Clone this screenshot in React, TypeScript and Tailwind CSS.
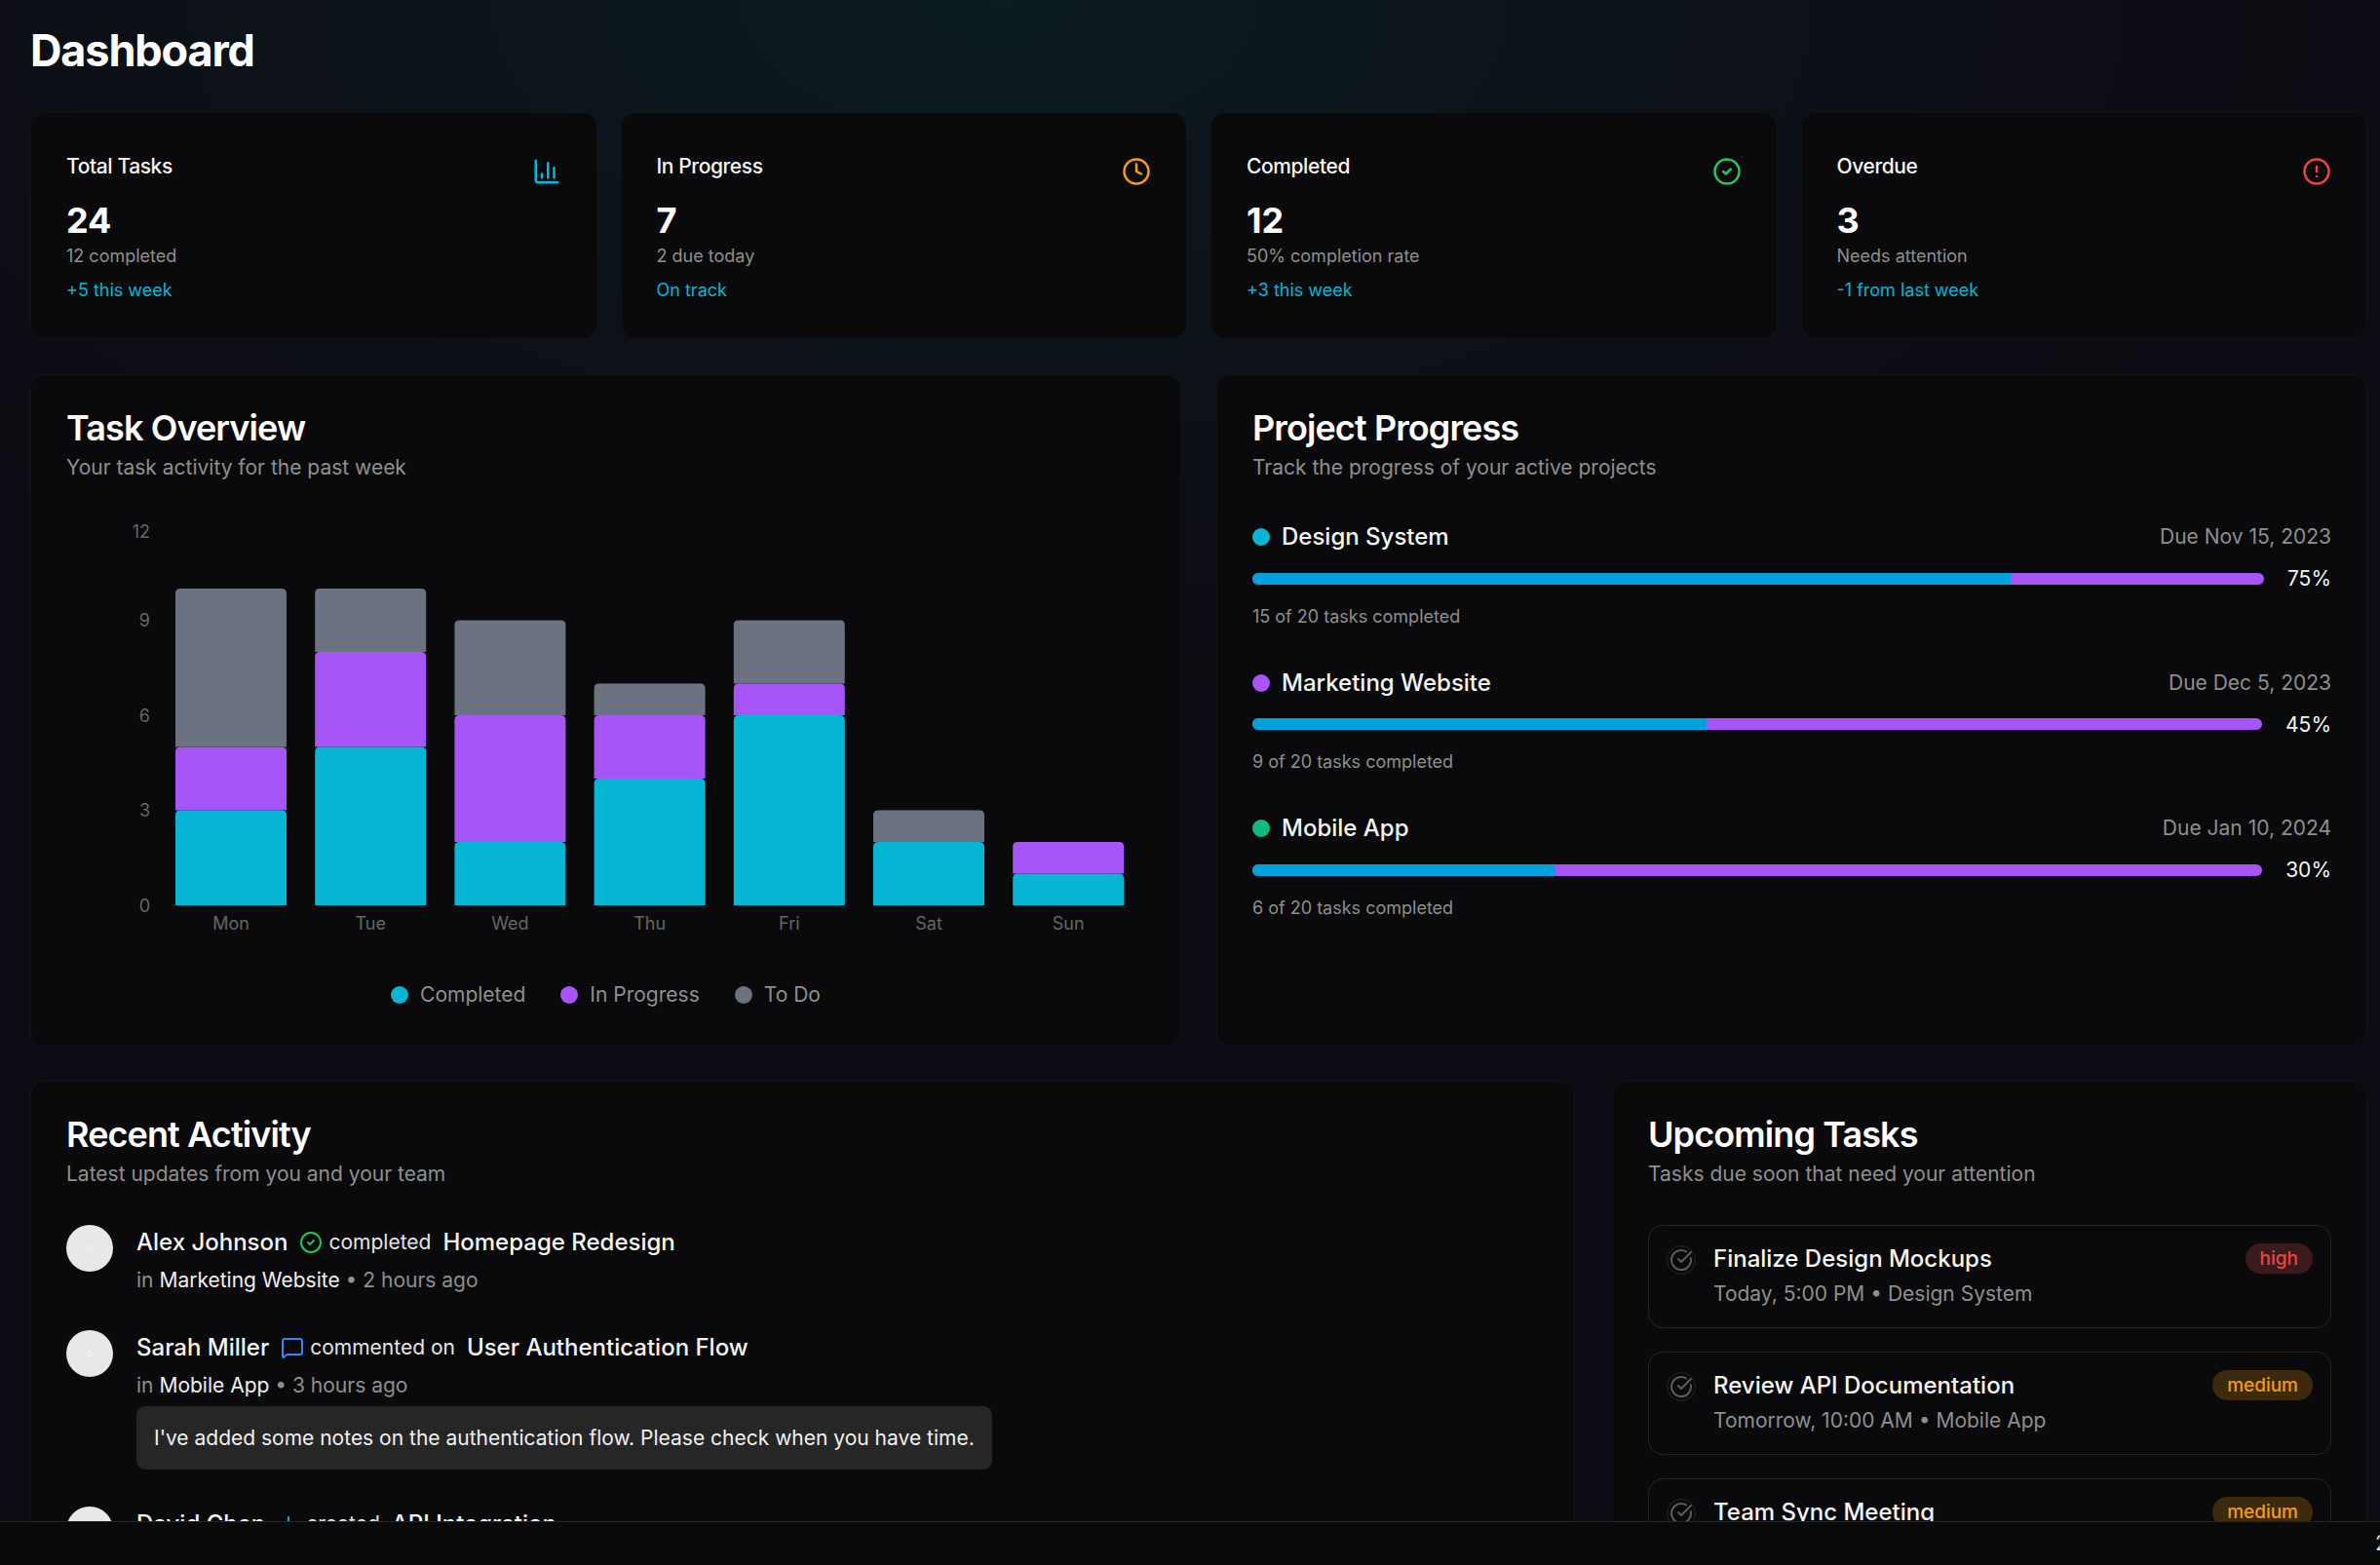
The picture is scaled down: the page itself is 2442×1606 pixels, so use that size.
import { ChartColumn, Clock, CircleCheck, CircleAlert, CircleCheckBig, MessageSquare, Plus } from 'lucide-react'

const STATS = [
  { title: 'Total Tasks', value: '24', sub: '12 completed', trend: '+5 this week', icon: <ChartColumn size={30} className="text-[#06b6d4]" /> },
  { title: 'In Progress', value: '7', sub: '2 due today', trend: 'On track', icon: <Clock size={30} className="text-[#f59e0b]" /> },
  { title: 'Completed', value: '12', sub: '50% completion rate', trend: '+3 this week', icon: <CircleCheck size={30} className="text-[#22c55e]" /> },
  { title: 'Overdue', value: '3', sub: 'Needs attention', trend: '-1 from last week', icon: <CircleAlert size={30} className="text-[#ef4444]" /> },
]

const WEEK = [
  { day: 'Mon', done: 3, doing: 2, todo: 5 },
  { day: 'Tue', done: 5, doing: 3, todo: 2 },
  { day: 'Wed', done: 2, doing: 4, todo: 3 },
  { day: 'Thu', done: 4, doing: 2, todo: 1 },
  { day: 'Fri', done: 6, doing: 1, todo: 2 },
  { day: 'Sat', done: 2, doing: 0, todo: 1 },
  { day: 'Sun', done: 1, doing: 1, todo: 0 },
]

const PROJECTS = [
  { name: 'Design System', due: 'Due Nov 15, 2023', pct: 75, note: '15 of 20 tasks completed', dot: 'bg-[#06b6d4]' },
  { name: 'Marketing Website', due: 'Due Dec 5, 2023', pct: 45, note: '9 of 20 tasks completed', dot: 'bg-[#a855f7]' },
  { name: 'Mobile App', due: 'Due Jan 10, 2024', pct: 30, note: '6 of 20 tasks completed', dot: 'bg-[#10b981]' },
]

const TASKS = [
  { title: 'Finalize Design Mockups', meta: 'Today, 5:00 PM • Design System', level: 'high' },
  { title: 'Review API Documentation', meta: 'Tomorrow, 10:00 AM • Mobile App', level: 'medium' },
  { title: 'Team Sync Meeting', meta: '', level: 'medium' },
]

const CARD = 'rounded-[15px] border border-[#ffffff0a] bg-[#0a0a0c]'

function CardHead({ title, sub }: { title: string; sub: string }) {
  return (
    <div>
      <h2 className="text-[36px] leading-[36px] font-semibold tracking-[-0.9px] text-white">{title}</h2>
      <p className="mt-[7px] text-[21px] leading-[31.5px] text-[#8f8f8f]">{sub}</p>
    </div>
  )
}

// one stacked segment, only the top corners are rounded
function seg(x: number, top: number, h: number) {
  const w = 114
  const r = 5
  return `M${x} ${top + h}V${top + r}Q${x} ${top} ${x + r} ${top}H${x + w - r}Q${x + w} ${top} ${x + w} ${top + r}V${top + h}Z`
}

function WeekChart() {
  const base = 399
  const unit = 32.5
  const ticks = [
    { t: '12', y: 16 },
    { t: '9', y: 107 },
    { t: '6', y: 205 },
    { t: '3', y: 302 },
    { t: '0', y: 400 },
  ]
  return (
    <svg width="1106" height="440" className="mt-[35px] block">
      {ticks.map(t => (
        <text key={t.t} x="86" y={t.y + 6} textAnchor="end" fontSize="18" fill="#666666">{t.t}</text>
      ))}
      {WEEK.map((d, i) => {
        const x = 112 + i * 143.2
        const doneTop = base - d.done * unit
        const doingTop = doneTop - d.doing * unit
        const todoTop = doingTop - d.todo * unit
        return (
          <g key={d.day}>
            <path d={seg(x, doneTop, d.done * unit)} fill="#06b6d4" />
            {d.doing > 0 && <path d={seg(x, doingTop, d.doing * unit)} fill="#a855f7" />}
            {d.todo > 0 && <path d={seg(x, todoTop, d.todo * unit)} fill="#6b7280" />}
            <text x={x + 57} y="424" textAnchor="middle" fontSize="18" fill="#666666">{d.day}</text>
          </g>
        )
      })}
    </svg>
  )
}

function LegendItem({ color, label }: { color: string; label: string }) {
  return (
    <div className="flex items-center gap-[12px]">
      <span className={`h-[18px] w-[18px] rounded-full ${color}`} />
      <span className="text-[21px] leading-[31.5px] text-[#8f8f8f]">{label}</span>
    </div>
  )
}

function Avatar() {
  return (
    <div className="flex h-[48px] w-[48px] shrink-0 items-center justify-center rounded-full bg-[#e8e8e8]">
      <span className="h-[6px] w-[6px] rounded-full border border-[#f4f4f4]" />
    </div>
  )
}

function Activity({ name, icon, verb, item, project, time, note }: { name: string; icon: React.ReactNode; verb: string; item: string; project?: string; time?: string; note?: string }) {
  return (
    <div className="flex gap-[24px]">
      <Avatar />
      <div>
        <div className="flex items-center text-[24px] leading-[36px] font-medium text-[#f5f5f5]">
          <span>{name}</span>
          <span className="mr-[6px] ml-[12px] flex">{icon}</span>
          <span className="mr-[12px] text-[21px] font-normal text-[#e5e5e5]">{verb}</span>
          <span>{item}</span>
        </div>
        {project && (
          <div className="mt-[5px] text-[21px] leading-[31.5px] text-[#8f8f8f]">
            in <span className="text-[#f0f0f0]">{project}</span> • {time}
          </div>
        )}
        {note && (
          <div className="mt-[6px] mb-[3px] w-fit rounded-[9px] bg-[#262626] px-[18px] py-[16.5px] text-[21px] leading-[31.5px] text-[#f0f0f0]">{note}</div>
        )}
      </div>
    </div>
  )
}

export default function App() {
  return (
    <div className="flex h-[1606px] w-[2442px] flex-col overflow-hidden bg-[#0a0a0a] font-['Inter',sans-serif]">
      <main className="flex-1 overflow-hidden bg-[radial-gradient(ellipse_1500px_800px_at_42%_0%,#0b1b20_0%,#0d0f16_65%,#0d0c14_100%)] pt-[25px] pr-[13px] pl-[31px]">
        <h1 className="mb-[36px] text-[45px] leading-[54px] font-bold tracking-[-1.125px] text-white">Dashboard</h1>

        <div className="mb-[36px] grid grid-cols-4 gap-[24px]">
          {STATS.map(s => (
            <div key={s.title} className={`${CARD} p-[36px]`}>
              <div className="flex items-start justify-between">
                <div className="mt-[3px] text-[21px] leading-[31.5px] font-medium tracking-[-0.4px] text-[#f5f5f5]">{s.title}</div>
                <div className="mt-[9px] h-[30px]">{s.icon}</div>
              </div>
              <div className="mt-[15px] text-[36px] leading-[40px] font-bold text-white">{s.value}</div>
              <div className="mt-[2.5px] text-[18px] leading-[27px] text-[#8f8f8f]">{s.sub}</div>
              <div className="mt-[8px] text-[18px] leading-[27px] text-[#06b6d4]">{s.trend}</div>
            </div>
          ))}
        </div>

        <div className="mb-[35px] grid grid-cols-2 gap-[36px]">
          <section className={`${CARD} p-[36px]`}>
            <CardHead title="Task Overview" sub="Your task activity for the past week" />
            <WeekChart />
            <div className="mt-[35px] flex justify-center gap-[36px]">
              <LegendItem color="bg-[#06b6d4]" label="Completed" />
              <LegendItem color="bg-[#a855f7]" label="In Progress" />
              <LegendItem color="bg-[#6b7280]" label="To Do" />
            </div>
          </section>

          <section className={`${CARD} p-[36px]`}>
            <CardHead title="Project Progress" sub="Track the progress of your active projects" />
            <div className="mt-[38px] flex flex-col gap-[37px]">
              {PROJECTS.map(p => (
                <div key={p.name}>
                  <div className="flex items-center justify-between">
                    <div className="flex items-center gap-[12px]">
                      <span className={`h-[18px] w-[18px] rounded-full ${p.dot}`} />
                      <span className="text-[24px] leading-[36px] font-medium text-[#f5f5f5]">{p.name}</span>
                    </div>
                    <span className="text-[21px] leading-[31.5px] text-[#8f8f8f]">{p.due}</span>
                  </div>
                  <div className="mt-[9px] flex items-center gap-[24px]">
                    <div className="h-[12px] flex-1 overflow-hidden rounded-full bg-[#a855f7]">
                      <div className="h-full bg-[#02a1db]" style={{ width: `${p.pct}%` }} />
                    </div>
                    <span className="text-[21px] leading-[31.5px] font-normal text-[#f5f5f5]">{p.pct}%</span>
                  </div>
                  <div className="mt-[9px] text-[18px] leading-[27px] text-[#8f8f8f]">{p.note}</div>
                </div>
              ))}
            </div>
          </section>
        </div>

        <div className="grid grid-cols-[1fr_775px] gap-[38px]">
          <section className={`${CARD} p-[36px]`}>
            <CardHead title="Recent Activity" sub="Latest updates from you and your team" />
            <div className="mt-[37px] flex flex-col gap-[35px]">
              <Activity name="Alex Johnson" icon={<CircleCheck size={24} className="text-[#22c55e]" />} verb="completed" item="Homepage Redesign" project="Marketing Website" time="2 hours ago" />
              <Activity name="Sarah Miller" icon={<MessageSquare size={24} className="text-[#3b82f6]" />} verb="commented on" item="User Authentication Flow" project="Mobile App" time="3 hours ago" note="I've added some notes on the authentication flow. Please check when you have time." />
              <Activity name="David Chen" icon={<Plus size={24} className="text-[#06b6d4]" />} verb="created" item="API Integration" />
            </div>
          </section>

          <section className={`${CARD} p-[36px]`}>
            <CardHead title="Upcoming Tasks" sub="Tasks due soon that need your attention" />
            <div className="mt-[37px] flex flex-col gap-[24px]">
              {TASKS.map(t => (
                <div key={t.title} className="flex h-[106px] items-start gap-[18px] rounded-[15px] border border-[#262626] p-[18px]">
                  <div className="mt-[2px] flex h-[30px] w-[30px] shrink-0 items-center justify-center rounded-full border border-[#262626]">
                    <CircleCheckBig size={24} className="text-[#5c5c5c]" />
                  </div>
                  <div className="flex-1">
                    <div className="text-[24px] leading-[31px] font-medium text-[#f5f5f5]">{t.title}</div>
                    <div className="mt-[5px] text-[21px] leading-[31.5px] text-[#8f8f8f]">{t.meta}</div>
                  </div>
                  <span className={`rounded-full px-[15px] text-[19px] leading-[31px] font-medium ${t.level === 'high' ? 'bg-[#3b1a1d] text-[#ef4444]' : 'bg-[#3d2a0c] text-[#f59e0b]'}`}>{t.level}</span>
                </div>
              ))}
            </div>
          </section>
        </div>
      </main>

      <footer className="h-[45px] shrink-0 overflow-hidden border-t border-[#262626] bg-[#0a0a0a] pl-[2437px]">
        <span className="text-[21px] leading-[44px] whitespace-nowrap text-[#d4d4d4]">2</span>
      </footer>
    </div>
  )
}
